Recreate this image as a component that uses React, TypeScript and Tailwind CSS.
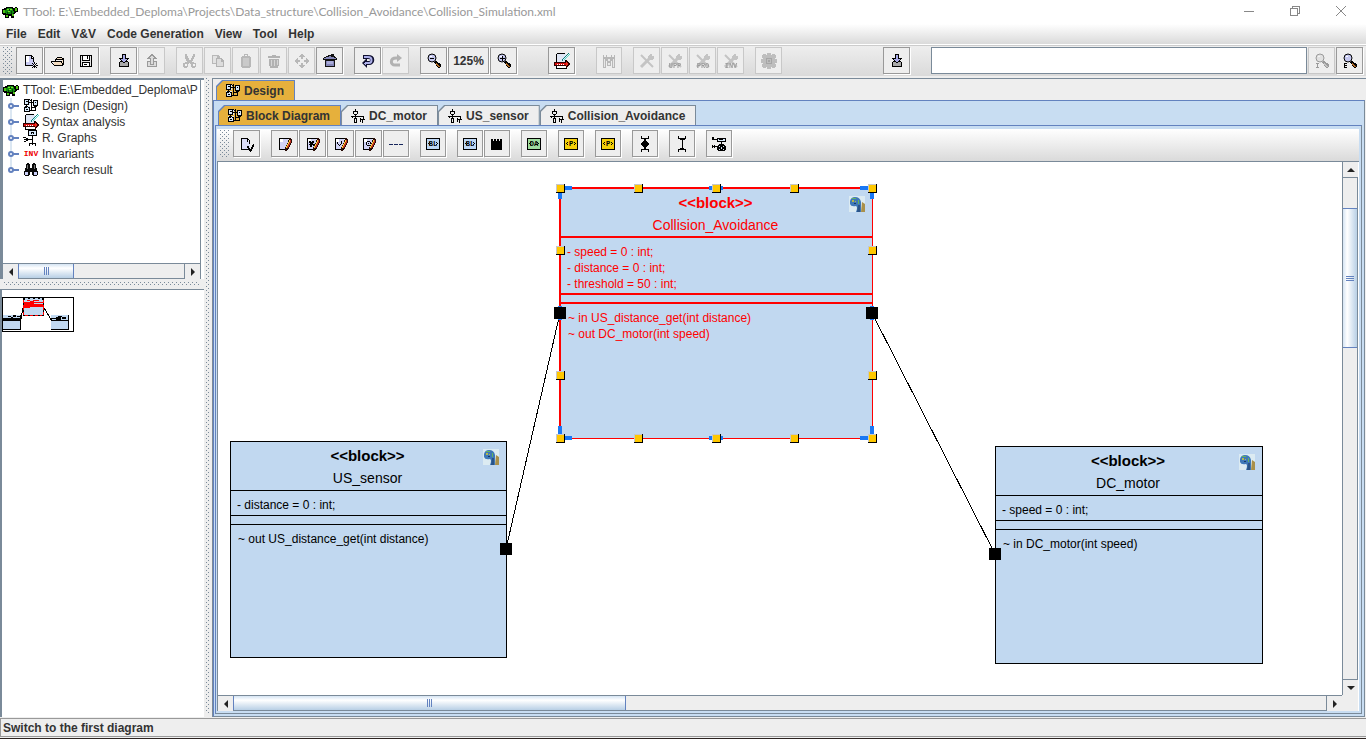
import React from "react";
import type { ReactNode } from "react";

type IconProps = { className?: string };

function Icon({ children, className = "size-4" }: { children: ReactNode; className?: string }) {
  return (
    <svg viewBox="0 0 16 16" className={`shrink-0 ${className}`} shapeRendering="crispEdges" fill="none" aria-hidden="true">
      {children}
    </svg>
  );
}

/* ---------- application icons ---------- */

function Turtle({ className }: IconProps) {
  return (
    <Icon className={className}>
      <path d="M4 3h7v1h2V3h2v1h1v4h-2v1h-1v1h-1v4H9v-2H7v2H3v-3H1v-1H0V5h2V4h2z" fill="#000" />
      <path d="M5 4h5v1h1v2h1v2h-1v1H4V9H3V6h1V5h1z" fill="#0f8a0f" />
      <path d="M1 6h2v3H1zM13 4h2v3h-2zM4 11h2v2H4zM10 10h2v2h-2z" fill="#4fc414" />
      <path d="M5 5h2v1H5zM8 5h2v1H8zM6 7h2v1H6z" fill="#7be32a" />
      <path d="M7 5h1v2H7zM5 8h1v2H5zM9 7h1v3H9z" fill="#033f03" />
    </Icon>
  );
}

function BlockDiagramIcon({ className }: IconProps) {
  return (
    <Icon className={className}>
      <path d="M1 1h6v6H1zM1 8h6v6H1zM10 2h4v6h-4z" fill="#d6e8fa" />
      <path
        d="M1 1h6v1H1zM1 1h1v6H1zM5 1h1v6H5zM1 6h5v1H1zM3 3h2v1H3zM3 7h1v3H3zM2 8h3v1H2zM1 9h1v5H1zM1 9h2v1H1zM5 9h2v1H5zM6 9h1v5H6zM1 13h6v1H1zM3 11h2v1H3zM7 2h1v1H7zM8 1h1v12H8zM7 12h1v1H7zM6 4h4v1H6zM10 2h5v1h-5zM10 2h1v6h-1zM14 2h1v6h-1zM11 7h3v2h-3zM12 4h1v1h-1zM12 9h1v4h-1zM9 9h4v1H9zM9 12h3v1H9z"
        fill="#000"
      />
    </Icon>
  );
}

function StateMachineIcon({ className }: IconProps) {
  return (
    <Icon className={className}>
      <path
        d="M5 1h1v2H5zM3 3h5v1H3zM3 3h1v3H3zM7 3h1v3H7zM4 6h3v1H4zM5 7h1v3H5zM2 8h12v1H2zM2 8h1v2H2zM4 10h3v1H4zM4 10h1v4H4zM6 10h1v4H6zM4 14h3v1H4zM13 9h1v2h-1zM10 11h5v1h-5zM10 10h1v4h-1zM12 12h1v3h-1zM1 8h2v1H1z"
        fill="#000"
      />
    </Icon>
  );
}

function SyntaxIcon({ className }: IconProps) {
  return (
    <Icon className={className}>
      <path d="M3 1h9v8H3z" fill="#dfe6f5" />
      <path d="M3 13h9v2H3z" fill="#fff" />
      <path d="M3 0h8v1H3zM2 1h1v9H2zM2 13h1v2H2zM2 15h11v1H2zM12 13h1v2h-1zM11 7h1v2h-1z" fill="#000" />
      <path d="M1 9h12v4H1z" fill="#d90f0f" />
      <path d="M0 9h1v4H0zM1 9h12v1H1zM1 12h12v1H1z" fill="#300" />
      <path d="M3 11h1v1H3zM5 11h1v1H5zM7 11h1v1H7zM9 11h1v1H9z" fill="#fff" />
      <path d="M12 7h1v1h1v1h1v1h1v2h-1v1h-1v1h-1v1h-1z" fill="#300" />
      <path d="M12 9h1v1h1v2h-1v1h-1z" fill="#f03020" />
      <path d="M14 0h1v1h-1v1h-1v1h-1v1h-1v1h-1v1H9v2H8V6h1V5h1V4h1V3h1V2h1V1h1z" fill="#087f7b" />
      <path d="M15 1h1v1h-1v1h-1v1h-1v1h-1v1h-1v1h-1V6h1V5h1V4h1V3h1V2h1z" fill="#53d8ca" />
    </Icon>
  );
}

function GraphIcon({ className }: IconProps) {
  return (
    <Icon className={className}>
      <path d="M6 1h7v5H6z" fill="#d6e8fa" />
      <path
        d="M5 0h9v1H5zM5 0h1v6H5zM13 0h1v6h-1zM5 5h9v1H5zM8 2h3v1H8zM8 3h1v1H8zM10 3h1v1h-1zM9 6h1v9H9zM0 7h3v1H0zM3 8h2v1H3zM1 9h9v1H1zM3 10h2v1H3zM1 11h2v1H1zM6 13h7v1H6zM6 14h1v2H6zM12 14h1v2h-1z"
        fill="#000"
      />
    </Icon>
  );
}

function BinocularsIcon({ className }: IconProps) {
  return (
    <Icon className={className}>
      <path d="M4 1h2v1h1v4h2V2h1V1h2v1h1v4h1v3h1v4h-1v1h-4v-1H9v-3H7v3H6v1H2v-1H1V9h1V6h1V2h1z" fill="#0a0a0a" />
      <path d="M4 3h1v4H4zM11 3h1v4h-1z" fill="#777" />
      <path d="M2 10h3v3H2zM11 10h3v3h-3z" fill="#ccd0fa" />
    </Icon>
  );
}

function InvIcon() {
  return (
    <svg viewBox="0 0 16 16" className="size-4 shrink-0">
      <text x="8" y="10" textAnchor="middle" fontSize="8" fontWeight="700" fontFamily="Liberation Mono, monospace" fill="#e00">
        INV
      </text>
    </svg>
  );
}

/* ---------- toolbar icons ---------- */

const NewIcon = () => (
  <Icon>
    <path d="M4 3h6v2h2v8H4z" fill="#c9cbf2" />
    <path d="M4 3h3v6H4z" fill="#fff" />
    <path d="M3 2h7v1H3zM3 2h1v11H3zM10 3h1v1h-1zM11 4h1v5h-1zM9 3h1v3H9zM9 5h3v1H9zM3 12h6v1H3z" fill="#000" />
    <path d="M12 9h1v2h-1zM12 13h1v2h-1zM9 12h2v1H9zM14 12h2v1h-2zM10 10h1v1h-1zM14 10h1v1h-1zM10 14h1v1h-1zM14 14h1v1h-1zM12 12h1v1h-1zM11 11h1v1h-1zM13 11h1v1h-1zM11 13h1v1h-1zM13 13h1v1h-1z" fill="#000" />
  </Icon>
);

const OpenIcon = () => (
  <Icon>
    <path d="M2 8h10v5H4V9H2zM6 5h7v7h-1V7H6z" fill="#f3dcc0" />
    <path d="M7 4h5v1H7zM6 5h1v1H6zM5 6h8v1H5zM12 5h1v1h-1zM13 5h1v7h-1zM1 8h10v1H1zM1 9h1v1H1zM2 10h1v1H2zM3 11h1v1H3zM4 12h9v1H4zM11 8h1v2h-1zM12 10h1v2h-1zM5 7h1v1H5z" fill="#000" />
  </Icon>
);

const SaveIcon = () => (
  <Icon>
    <path d="M2 2h12v12H2z" fill="#000" />
    <path d="M3 3h10v10H3z" fill="#e9e9e9" />
    <path d="M4 2h8v6H4zM4 9h8v5H4z" fill="#000" />
    <path d="M5 3h6v4H5zM5 10h6v3H5z" fill="#fff" />
    <path d="M9 3h1v3H9zM6 11h3v1H6z" fill="#000" />
  </Icon>
);

const ImportIcon = () => (
  <Icon>
    <path d="M4 8h8v1h1v5H3V9h1z" fill="#000" />
    <path d="M4 9h8v4H4z" fill="#aaaaaa" />
    <path d="M6 1h4v4h3v1h-1v1h-1v1h-1v1H9v1H7V9H6V8H5V7H4V6H3V5h3z" fill="#000" />
    <path d="M7 2h2v4h2v1h-1v1H9v1H7V8H6V7H5V6h2z" fill="#a9abe8" />
  </Icon>
);

const ExportIcon = () => (
  <Icon>
    <path d="M3 8h10v6H3z" fill="#000" />
    <path d="M4 9h8v4H4z" fill="#bbb" />
    <path d="M7 1h2v1h1v1h1v1h1v1h1v1h-3v6H6V6H3V5h1V4h1V3h1V2h1z" fill="#000" />
    <path d="M7 3h2v1h1v1H9v6H7V5H6V4h1z" fill="#bbb" />
  </Icon>
);

const CutIcon = () => (
  <Icon>
    <path d="M3 1h2v2h1v2h1v2h2V5h1V3h1V1h2v3h-1v2h-1v2h-1v1h2v1h2v4h-1v1h-3v-1h-1v-3H8v-1H7v1H6v3H5v1H2v-1H1v-4h2V9h2V8H4V6H3z" fill="#555" />
    <path d="M3 11h2v2H3zM11 11h2v2h-2z" fill="#fff" />
  </Icon>
);

const CopyIcon = () => (
  <Icon>
    <path d="M2 2h6l2 2v7H2z" fill="#555" />
    <path d="M3 3h4v7H3z" fill="#ccc" />
    <path d="M6 5h5l3 3v6H6z" fill="#444" />
    <path d="M7 6h4v3h2v4H7z" fill="#bbb" />
  </Icon>
);

const PasteIcon = () => (
  <Icon>
    <path d="M6 1h4v2h2v1h1v10h-1v1H4v-1H3V4h1V3h2z" fill="#555" />
    <path d="M5 5h6v8H5z" fill="#888" />
    <path d="M7 2h2v1H7z" fill="#fff" />
  </Icon>
);

const TrashIcon = () => (
  <Icon>
    <path d="M6 2h4v1h4v2H2V3h4zM3 6h10v7h-1v2H4v-2H3z" fill="#444" />
    <path d="M5 7h1v6H5zM8 7h1v6H8zM11 7h1v5h-1z" fill="#aaa" />
  </Icon>
);

const MoveIcon = () => (
  <Icon>
    <path d="M7 1h2v1h1v1h1v1H9v2H7V4H5V3h1V2h1zM7 10h2v2h2v1h-1v1H9v1H7v-1H6v-1H5v-1h2zM1 7h1V6h1V5h1v2h2v2H4v2H3v-1H2V9H1zM10 7h2V5h1v1h1v1h1v2h-1v1h-1v1h-1V9h-2z" fill="#555" />
  </Icon>
);

const HomeIcon = () => (
  <Icon>
    <path d="M6 2h3V1h3v2h1v1h1v1h1v2h-2v7H3V7H1V5h1V4h2V3h2z" fill="#111" />
    <path d="M7 3h2v1h3v1h2v1H2V5h2V4h3zM4 8h8v5H4z" fill="#8587b8" />
    <path d="M5 8h6v3H5z" fill="#a9abda" />
  </Icon>
);

const UndoIcon = () => (
  <Icon>
    <path d="M3 4h5c6 0 5 6 1 6H6" stroke="#101030" strokeWidth="4" shapeRendering="auto" />
    <path d="M2 10l5-5v10z" fill="#101030" shapeRendering="auto" />
    <path d="M4 4h4c5 0 4 6 1 6H6" stroke="#adb0ea" strokeWidth="2" shapeRendering="auto" />
    <path d="M4 10l2-2v5z" fill="#adb0ea" />
  </Icon>
);

const RedoIcon = () => (
  <Icon>
    <path d="M12 12H7C2 12 2 5 8 5h2" stroke="#444" strokeWidth="3" shapeRendering="auto" />
    <path d="M9 1l5 4-5 4z" fill="#444" shapeRendering="auto" />
  </Icon>
);

function MagnifierIcon({ mark }: { mark?: "minus" | "plus" | "I" | "E" }) {
  return (
    <Icon>
      <path d="M9 8h2v1h1v1h2v1h1v3h-1v1h-2v-1h-1v-1h-1v-2H9v-1H8V9h1z" fill="#000" />
      <path d="M10 10h1v1h1v1h1v1h1v1h-2v-1h-1v-1h-1z" fill="#b06a24" />
      <circle cx="6" cy="5" r="4" fill="#c5c8f0" stroke="#000" shapeRendering="auto" />
      <path d="M4 3h2v1H4z" fill="#fff" />
      {mark === "minus" && <path d="M4 5h4v1H4z" fill="#000" />}
      {mark === "plus" && <path d="M4 5h5v1H4zM6 3h1v5H6z" fill="#000" />}
      {mark === "I" && <path d="M2 10h3v1H2zM3 10h1v5H3zM2 14h3v1H2z" fill="#000" />}
      {mark === "E" && <path d="M2 10h3v1H2zM2 10h1v5H2zM2 12h3v1H2zM2 14h3v1H2z" fill="#000" />}
    </Icon>
  );
}

const CheckIcon = () => (
  <Icon>
    <path d="M2 2h1v2h2V2h1v2h4V2h1v2h2V2h1v13h-3V8h-1v5H6V8H5v7H2z" fill="#555" />
    <path d="M3 6h1v8H3zM12 6h1v8h-1zM7 6h2v2H7zM7 10h2v2H7z" fill="#ddd" />
  </Icon>
);

function ToolsIcon({ label }: { label?: string }) {
  return (
    <Icon>
      <path d="M2 2l12 12" stroke="#777" strokeWidth="2" shapeRendering="auto" />
      <path d="M12 4L2 14" stroke="#777" strokeWidth="3" shapeRendering="auto" />
      <path d="M11 1h2v2h2v2l-2 2h-2L9 5V3z" fill="#777" />
      {label && (
        <text x="8" y="15" textAnchor="middle" fontSize="7" fontWeight="700" fontFamily="Liberation Mono, monospace" fill="#000">
          {label}
        </text>
      )}
    </Icon>
  );
}

const GearIcon = () => (
  <Icon>
    <path d="M6 0h4v2h1V1h3v1h1v3h-1v1h2v4h-2v1h1v3h-1v1h-3v-1h-1v2H6v-2H5v1H2v-1H1v-3h1v-1H0V6h2V5H1V2h1V1h3v1h1z" fill="#666" />
    <circle cx="8" cy="8" r="3" stroke="#222" />
    <path d="M7 7h2v2H7z" fill="#222" />
  </Icon>
);

const PageCheckIcon = () => (
  <Icon>
    <path d="M3 3h6v2h2v8H3z" fill="#d9dbf7" />
    <path d="M2 2h7v1H2zM2 2h1v12H2zM9 3h1v1H9zM10 4h1v4h-1zM8 3h1v3H8zM2 13h7v1H2z" fill="#000" />
    <path d="M8 10h2v2h1v1h1v-2h1v-2h1V8h1v3h-1v2h-1v2h-1v1h-1v-1h-1v-1H9v-2H8z" fill="#000" />
  </Icon>
);

function PageEditIcon({ mark }: { mark?: string }) {
  return (
    <Icon>
      <path d="M3 3h8v9l-2 2H3z" fill="#d0d2f5" />
      <path d="M3 3h3v3H3z" fill="#fff" />
      <path d="M2 2h10v1H2zM2 2h1v12H2zM2 13h7v1H2zM10 12h1v2h-1z" fill="#000" />
      {mark && <path d={mark} fill="#000" />}
      <path d="M12 2h2v1h1v4h-1v2h-1v2h-1v2h-2v2H8v-4h1V9h1V7h1V4h1z" fill="#2a0d08" />
      <path d="M12 4h1v2h-1v2h-1v2h-1v2H9v-2h1V8h1V6h1z" fill="#f7d23a" />
      <path d="M13 4h1v3h-1v2h-1v2h-1v1h-1v-2h1V8h1V6h1z" fill="#c33020" />
    </Icon>
  );
}

const DashIcon = () => (
  <Icon>
    <path d="M1 8h4v1H1zM6 8h4v1H6zM11 8h4v1h-4z" fill="#17265c" />
  </Icon>
);

function LabelIcon({ label, tone }: { label: string; tone: "blue" | "green" | "yellow" }) {
  const fill = { blue: "#bcd6f5", green: "#9fdc9f", yellow: "#f5cf0a" }[tone];
  return (
    <Icon>
      <path d="M1 2h14v12H1z" fill="#000" />
      <path d="M2 3h12v10H2z" fill={fill} />
      <path d="M3 7h1v1H3zM4 6h1v1H4zM4 8h1v1H4zM12 7h1v1h-1zM11 6h1v1h-1zM11 8h1v1h-1z" fill="#000" />
      <text x="8" y="10" textAnchor="middle" fontSize="7" fontWeight="700" fontFamily="Liberation Sans Narrow, Liberation Mono, monospace" fill="#000">
        {label}
      </text>
    </Icon>
  );
}

const CastleIcon = () => (
  <Icon>
    <path d="M2 3h2v2h1V3h2v2h1V3h2v2h1V3h2v11H2z" fill="#000" />
  </Icon>
);

const CompositionIcon = () => (
  <Icon>
    <path d="M4 0h1v2h6V0h1v3H9v2h1v1h1v1h1v2h-1v1h-1v1H9v2h3v3h-1v-2H5v2H4v-3h3v-2H6v-1H5V9H4V7h1V6h1V5h1V3H4z" fill="#000" />
  </Icon>
);

const PortLinkIcon = () => (
  <Icon>
    <path d="M4 0h1v2h6V0h1v3h-1v1H9v8h1v1h2v3h-1v-2H5v2H4v-3h2v-1h2V4H6V3H4z" fill="#000" />
  </Icon>
);

const FlowIcon = () => (
  <Icon>
    <path d="M7 3h7v3H7z" fill="#d6e8fa" />
    <path d="M1 1h2v2h3v1H1zM6 2h9v1H6zM6 2h1v4H6zM14 2h1v4h-1zM6 5h9v1H6zM8 3h4v1H8zM1 10h5v1H1zM1 9h1v3H1zM3 9h1v3H3zM10 6h1v2h2v1h1v1h1v4h-1v1H7v-1H6v-4h1V9h1V8h2z" fill="#000" />
    <path d="M8 10h1v1H8zM12 10h1v1h-1zM8 13h1v1H8zM12 13h1v1h-1zM10 11h1v2h-1z" fill="#d6e8fa" />
  </Icon>
);

/* ---------- widgets ---------- */

const bumps =
  "bg-[conic-gradient(at_1px_1px,transparent_75%,#7a8a99_0),conic-gradient(at_1px_1px,transparent_75%,#7a8a99_0)] bg-[length:4px_4px] bg-[position:0_0,2px_2px]";

function ToolButton({
  label,
  children,
  disabled = false,
  width = "w-[27px]",
}: {
  label: string;
  children: ReactNode;
  disabled?: boolean;
  width?: string;
}) {
  return (
    <button
      type="button"
      aria-label={label}
      disabled={disabled}
      className={`flex h-[27px] shrink-0 items-center justify-center border bg-[#eeeeee] ${width} ${
        disabled ? "border-[#c8c8c8]" : "border-[#999999] shadow-[1px_1px_0_#ffffff]"
      }`}
    >
      <span className={`flex ${disabled ? "opacity-35 grayscale" : ""}`}>{children}</span>
    </button>
  );
}

function Group({ children }: { children: ReactNode }) {
  return <div className="flex shrink-0 gap-px">{children}</div>;
}

function Tab({ icon, label, active = false }: { icon: ReactNode; label: string; active?: boolean }) {
  return (
    <button
      type="button"
      role="tab"
      aria-selected={active}
      className={`flex pl-px pt-px pr-px [clip-path:polygon(6px_0,100%_0,100%_100%,0_100%,0_6px)] ${
        active ? "bg-[#6382bf]" : "bg-[#7a8a99]"
      }`}
    >
      <span
        className={`flex h-[19px] items-center gap-[3px] pl-2 pr-[10px] [clip-path:polygon(6px_0,100%_0,100%_100%,0_100%,0_6px)] ${
          active ? "bg-[#e6b03c]" : "bg-[#eeeeee]"
        }`}
      >
        {icon}
        <span>{label}</span>
      </span>
    </button>
  );
}

function Arrow({ dir }: { dir: "left" | "right" | "up" | "down" }) {
  const d = {
    left: "M8 2v8L4 6z",
    right: "M4 2v8l4-4z",
    up: "M2 8h8L6 4z",
    down: "M2 4h8L6 8z",
  }[dir];
  return (
    <button
      type="button"
      aria-label={`Scroll ${dir}`}
      className="flex size-[15px] shrink-0 items-center justify-center bg-[#eeeeee]"
    >
      <svg viewBox="0 0 12 12" className="size-3">
        <path d={d} fill="#222" />
      </svg>
    </button>
  );
}

function HScroll({ thumb }: { thumb: string }) {
  return (
    <div className="flex h-4 shrink-0 border-y border-[#7a8a99] bg-[#eeeeee]">
      <Arrow dir="left" />
      <div className="flex flex-1 border-r border-[#7a8a99]">
        <div
          className={`flex items-center justify-center gap-px border-x border-[#6382bf] bg-linear-to-b from-[#d5e4f3] via-white via-30% to-[#b8cfe5] ${thumb}`}
        >
          <span className="h-2 w-px bg-[#6382bf]" />
          <span className="h-2 w-px bg-[#6382bf]" />
          <span className="h-2 w-px bg-[#6382bf]" />
        </div>
      </div>
      <Arrow dir="right" />
    </div>
  );
}

function VScroll() {
  return (
    <div className="flex w-4 shrink-0 flex-col border-x border-[#7a8a99] bg-[#eeeeee]">
      <Arrow dir="up" />
      <div className="flex flex-1 flex-col border-y border-[#7a8a99]">
        <div className="h-[6%]" />
        <div className="flex h-[28%] flex-col items-center justify-center gap-px border-y border-[#6382bf] bg-linear-to-r from-[#d5e4f3] via-white via-30% to-[#b8cfe5]">
          <span className="h-px w-2 bg-[#6382bf]" />
          <span className="h-px w-2 bg-[#6382bf]" />
          <span className="h-px w-2 bg-[#6382bf]" />
        </div>
      </div>
      <Arrow dir="down" />
    </div>
  );
}

function TreeRow({ icon, label, last = false }: { icon: ReactNode; label: string; last?: boolean }) {
  return (
    <li className="flex h-4 items-center pl-1">
      <svg viewBox="0 0 16 16" className="size-4 shrink-0" fill="none" aria-hidden="true">
        <path d={last ? "M4 0v8" : "M4 0v16"} stroke="#b8cfe5" />
        <path d="M6 8h6" stroke="#6382bf" strokeWidth="2" />
        <circle cx="4" cy="8" r="2" fill="#fff" stroke="#6382bf" strokeWidth="2" />
      </svg>
      <span className="flex items-center gap-[3px]">
        {icon}
        <span className="whitespace-nowrap">{label}</span>
      </span>
    </li>
  );
}

/* ---------- diagram ---------- */

function DinoIcon() {
  return (
    <svg viewBox="0 0 16 16" className="absolute right-[7px] top-[7px] size-4" aria-hidden="true">
      <path d="M0 0h16v16H0z" fill="#dcebf2" />
      <path d="M1 5q1-4 5-4 5 0 6 5v10H7q2-5 0-6-5 1-6-2z" fill="#3f78b8" />
      <path d="M3 2h4v1H3zM9 4h1v4H9z" fill="#62b45c" />
      <path d="M3 4h2v2H3zM6 5h1v1H6z" fill="#b5b84a" />
      <path d="M9 9h2v7H8z" fill="#2a5488" />
      <path d="M13 6l3 2v8h-4z" fill="#a9904a" />
      <path d="M5 7h2v1H5z" fill="#173a66" />
    </svg>
  );
}

type BlockProps = {
  name: string;
  attributes: string[];
  methods: string[];
  position: string;
  selected?: boolean;
};

function Block({ name, attributes, methods, position, selected = false }: BlockProps) {
  const line = selected ? "border-[#ff0000] border-b-2" : "border-black border-b";
  return (
    <section
      className={`absolute flex flex-col bg-[#c1d8f0] ${position} ${
        selected ? "border border-l-2 border-t-2 border-[#ff0000] text-[#ff0000]" : "border border-black text-black"
      }`}
    >
      <header className={`h-[49px] shrink-0 pr-[2px] pt-[2px] text-center ${line}`}>
        <h2 className="text-[15px] font-bold leading-[23px]">&lt;&lt;block&gt;&gt;</h2>
        <p className="text-sm leading-[23px]">{name}</p>
      </header>
      <ul className={`px-[6px] pt-[6px] ${line} ${selected ? "pb-px" : "pb-[2px]"}`}>
        {attributes.map((a) => (
          <li key={a}>{a}</li>
        ))}
      </ul>
      <div className={`h-[9px] shrink-0 ${line}`} />
      <ul className="px-[7px] pt-[6px]">
        {methods.map((m) => (
          <li key={m}>{m}</li>
        ))}
      </ul>
      <DinoIcon />
    </section>
  );
}

const handles = [
  [342, 26], [420, 26], [498, 26], [576, 26], [654, 26],
  [342, 88], [654, 88], [342, 213], [654, 213],
  [342, 276], [420, 276], [498, 276], [576, 276], [654, 276],
];

const anchors = [
  [342, 24, 12, 4], [340, 26, 4, 11], [491, 24, 14, 4], [642, 24, 12, 4], [652, 26, 4, 11],
  [342, 274, 12, 4], [340, 264, 4, 12], [491, 274, 14, 4], [642, 274, 12, 4], [652, 264, 4, 12],
  [340, 144, 4, 14], [652, 144, 4, 14],
];

const ports = [[336, 145], [648, 145], [282, 381], [771, 386]];

function Canvas() {
  return (
    <div className="relative min-w-0 flex-1 overflow-hidden bg-white text-xs leading-4">
      <Block
        name="US_sensor"
        attributes={["- distance = 0 : int;"]}
        methods={["~ out US_distance_get(int distance)"]}
        position="left-3 top-[279px] h-[217px] w-[277px]"
      />
      <Block
        name="DC_motor"
        attributes={["- speed = 0 : int;"]}
        methods={["~ in DC_motor(int speed)"]}
        position="left-[777px] top-[284px] h-[218px] w-[268px]"
      />
      <Block
        selected
        name="Collision_Avoidance"
        attributes={["- speed = 0 : int;", "- distance = 0 : int;", "- threshold = 50 : int;"]}
        methods={["~ in US_distance_get(int distance)", "~ out DC_motor(int speed)"]}
        position="left-[341px] top-[25px] h-[252px] w-[314px]"
      />
      <svg className="pointer-events-none absolute inset-0 size-full" shapeRendering="crispEdges" aria-hidden="true">
        <path d="M342 151L288 387M654 151L777 392" stroke="#000" fill="none" />
        {anchors.map(([x, y, w, h]) => (
          <rect key={`a${x}-${y}`} x={x} y={y} width={w} height={h} fill="#1a78f5" />
        ))}
        {handles.map(([x, y]) => (
          <g key={`h${x}-${y}`}>
            <rect x={x - 4} y={y - 4} width="9" height="9" fill="#000" />
            <rect x={x - 4} y={y - 4} width="8" height="8" fill="#c8c8c8" />
            <rect x={x - 3} y={y - 3} width="7" height="7" fill="#ffc800" />
          </g>
        ))}
        {ports.map(([x, y]) => (
          <rect key={`p${x}-${y}`} x={x} y={y} width="12" height="12" fill="#000" />
        ))}
      </svg>
    </div>
  );
}

function MiniMap() {
  return (
    <svg viewBox="0 0 72 35" className="h-[35px] w-[72px]" shapeRendering="crispEdges" role="img" aria-label="Overview">
      <path d="M0 0h72v35H0z" fill="#000" />
      <path d="M1 1h70v33H1z" fill="#fff" />
      <path d="M1 18h18v14H1zM49 18h17v14H49zM21 1h20v18H21z" fill="#c1d8f0" />
      <path d="M1 21h18v3H1zM18 18h1v15h-1zM1 32h18v1H1zM6 19h3v1H6zM9 20h2v1H9zM11 18h3v2h-3zM15 19h3v1h-3zM49 21h6v1h-6zM49 23h17v1H49zM54 20h5v4h-5zM56 19h4v1h-4zM60 20h4v2h-4zM66 18h1v15h-1zM49 32h18v1H49z" fill="#000" />
      <path d="M21 5h20v5H21zM21 1h1v18h-1zM41 1h1v18h-1zM22 10h6v1h-6zM25 3h3v1h-3zM28 4h4v1h-4zM31 3h6v1h-6z" fill="#f00" />
      <path d="M32 6h9v1h-9z" fill="#c1d8f0" />
      <path d="M21 19h21v-1H21z" fill="#f00" />
      <path d="M21 1h2v2h-2zM26 1h2v1h-2zM31 1h2v1h-2zM36 1h2v1h-2zM40 1h2v2h-2zM21 6h1v2h-1zM41 6h1v2h-1zM21 13h1v2h-1zM41 13h1v2h-1zM21 18h2v1h-2zM26 18h2v1h-2zM31 18h2v1h-2zM36 18h2v1h-2zM40 18h2v1h-2z" fill="#000" />
      <path d="M21 11L19 22M42 11l8 13" stroke="#000" fill="none" />
    </svg>
  );
}

/* ---------- page ---------- */

const menus = ["File", "Edit", "V&V", "Code Generation", "View", "Tool", "Help"];

export default function App() {
  return (
    <div className="flex h-screen flex-col overflow-hidden bg-[#eeeeee] font-['Liberation_Sans',Arial,sans-serif] text-xs text-[#333333]">
      <header className="flex h-6 shrink-0 items-center bg-white pl-[2px] pr-[2px]">
        <Turtle />
        <h1 className="flex-1 truncate pl-[5px] font-['Lato','Open_Sans',sans-serif] text-xs text-[#999999]">
          TTool: E:\Embedded_Deploma\Projects\Data_structure\Collision_Avoidance\Collision_Simulation.xml
        </h1>
        <div className="flex h-[21px] self-start text-[#888888]">
          <button type="button" aria-label="Minimize" className="flex w-[46px] items-center justify-center">
            <svg viewBox="0 0 10 10" className="size-[10px]" stroke="currentColor" shapeRendering="crispEdges"><path d="M0 5h10" /></svg>
          </button>
          <button type="button" aria-label="Restore" className="flex w-[46px] items-center justify-center">
            <svg viewBox="0 0 10 10" className="size-[10px]" fill="currentColor" shapeRendering="crispEdges">
              <path d="M0 2h8v1H0zM0 2h1v8H0zM7 2h1v8H7zM0 9h8v1H0zM2 0h8v1H2zM2 0h1v2H2zM9 0h1v8H9zM8 7h1v1H8z" />
            </svg>
          </button>
          <button type="button" aria-label="Close" className="flex w-[46px] items-center justify-center">
            <svg viewBox="0 0 10 10" className="size-[10px]" stroke="currentColor"><path d="M0 0l10 10M10 0L0 10" /></svg>
          </button>
        </div>
      </header>

      <nav className="flex h-[21px] shrink-0 items-center gap-[11px] border-b border-white bg-linear-to-b from-white to-[#dadada] pl-[6px] font-bold">
        {menus.map((m) => (
          <button key={m} type="button">
            {m}
          </button>
        ))}
      </nav>

      <div role="toolbar" aria-label="Main tools" className="flex h-[33px] shrink-0 items-start gap-[11px] border-b-2 border-t border-b-[#eeeeee] border-t-[#cccccc] bg-linear-to-b from-[#eeeeee] to-[#dadada] pr-[3px] pt-px">
        <div className={`-mr-[8px] ml-[3px] h-[27px] w-[10px] shrink-0 ${bumps}`} />
        <Group>
          <ToolButton label="New"><NewIcon /></ToolButton>
          <ToolButton label="Open"><OpenIcon /></ToolButton>
          <ToolButton label="Save"><SaveIcon /></ToolButton>
        </Group>
        <Group>
          <ToolButton label="Import"><ImportIcon /></ToolButton>
          <ToolButton label="Export" disabled><ExportIcon /></ToolButton>
        </Group>
        <Group>
          <ToolButton label="Cut" disabled><CutIcon /></ToolButton>
          <ToolButton label="Copy" disabled><CopyIcon /></ToolButton>
          <ToolButton label="Paste" disabled><PasteIcon /></ToolButton>
          <ToolButton label="Delete" disabled><TrashIcon /></ToolButton>
          <ToolButton label="Move" disabled><MoveIcon /></ToolButton>
          <ToolButton label="First diagram"><HomeIcon /></ToolButton>
        </Group>
        <Group>
          <ToolButton label="Undo"><UndoIcon /></ToolButton>
          <ToolButton label="Redo" disabled><RedoIcon /></ToolButton>
        </Group>
        <Group>
          <ToolButton label="Zoom out"><MagnifierIcon mark="minus" /></ToolButton>
          <ToolButton label="Zoom 125%" width="w-[41px]"><span className="font-bold">125%</span></ToolButton>
          <ToolButton label="Zoom in"><MagnifierIcon mark="plus" /></ToolButton>
        </Group>
        <div className="ml-5">
          <ToolButton label="Syntax analysis"><SyntaxIcon /></ToolButton>
        </div>
        <div className="ml-[10px]">
          <ToolButton label="Simulation" disabled width="w-[26px]"><CheckIcon /></ToolButton>
        </div>
        <Group>
          <ToolButton label="Verify" disabled><ToolsIcon /></ToolButton>
          <ToolButton label="Verify with UPPAAL" disabled><ToolsIcon label="UPP" /></ToolButton>
          <ToolButton label="Verify with ProVerif" disabled><ToolsIcon label="PRO" /></ToolButton>
          <ToolButton label="Invariants" disabled><ToolsIcon label="INV" /></ToolButton>
        </Group>
        <ToolButton label="Generate code" disabled><GearIcon /></ToolButton>
        <div className="ml-[90px] mr-[10px]">
          <ToolButton label="Download"><ImportIcon /></ToolButton>
        </div>
        <div className="flex min-w-0 flex-1 gap-px">
          <input
            type="text"
            aria-label="Search"
            className="h-[27px] min-w-0 flex-1 border border-[#7a8a99] bg-white px-1 outline-none"
          />
          <ToolButton label="Search inside" disabled><MagnifierIcon mark="I" /></ToolButton>
          <ToolButton label="Search external"><MagnifierIcon mark="E" /></ToolButton>
        </div>
      </div>

      <div className="flex min-h-0 flex-1">
        <aside className="flex w-[204px] shrink-0 flex-col bg-white">
          <div className="flex h-[201px] shrink-0 flex-col border-l-[3px] border-t-2 border-[#7a8a99] pr-[3px]">
            <div className="flex min-h-0 flex-1 flex-col overflow-hidden border-r border-[#7a8a99]">
              <ul className="flex-1 overflow-hidden pt-[2px]">
                <li className="flex h-4 items-center gap-1">
                  <Turtle />
                  <span className="whitespace-nowrap">TTool: E:\Embedded_Deploma\P</span>
                </li>
                <TreeRow icon={<BlockDiagramIcon />} label="Design (Design)" />
                <TreeRow icon={<SyntaxIcon />} label="Syntax analysis" />
                <TreeRow icon={<GraphIcon />} label="R. Graphs" />
                <TreeRow icon={<InvIcon />} label="Invariants" />
                <TreeRow icon={<BinocularsIcon />} label="Search result" last />
              </ul>
              <HScroll thumb="w-[34%]" />
            </div>
          </div>
          <div className="flex h-[11px] shrink-0 items-center border-b border-[#7a8a99] bg-[#eeeeee] pl-1 pr-1">
            <div className={`h-[4px] flex-1 ${bumps}`} />
          </div>
          <div className="flex-1 border-l-2 border-[#7a8a99] bg-white pt-[7px]">
            <MiniMap />
          </div>
        </aside>

        <div className="flex w-2 shrink-0 justify-center bg-[#eeeeee] pb-1">
          <div className={`w-[4px] ${bumps}`} />
        </div>

        <main className="flex min-w-0 flex-1 flex-col border-l border-t border-[#7a8a99] bg-[#eeeeee] pr-px font-bold">
          <div role="tablist" aria-label="Models" className="flex h-[21px] shrink-0 items-end pl-[3px]">
            <Tab active icon={<BlockDiagramIcon />} label="Design" />
          </div>
          <div className="flex min-h-0 flex-1 flex-col border border-b-[#7a8a99] border-l-[#6382bf] border-r-[#7a8a99] border-t-[#6382bf] bg-[#c8ddf2] pb-[2px] pl-px pr-[2px] pt-1">
            <div role="tablist" aria-label="Diagrams" className="flex h-5 shrink-0 pl-[3px]">
              <Tab active icon={<BlockDiagramIcon />} label="Block Diagram" />
              <Tab icon={<StateMachineIcon />} label="DC_motor" />
              <Tab icon={<StateMachineIcon />} label="US_sensor" />
              <Tab icon={<StateMachineIcon />} label="Collision_Avoidance" />
            </div>
            <div className="flex min-h-0 flex-1 flex-col border border-b-[#7a8a99] border-l-[#6382bf] border-r-[#7a8a99] border-t-[#6382bf] pb-[2px] pl-px pr-[2px] pt-[3px] font-normal">
              <div role="toolbar" aria-label="Diagram tools" className="flex h-8 shrink-0 items-start gap-[11px] bg-linear-to-b from-white to-[#dadada] pt-px">
                <div className={`-mr-[8px] ml-[3px] h-[27px] w-[10px] shrink-0 ${bumps}`} />
                <ToolButton label="Edit model"><PageCheckIcon /></ToolButton>
                <Group>
                  <ToolButton label="Note"><PageEditIcon /></ToolButton>
                  <ToolButton label="Pragma"><PageEditIcon mark="M4 5h2v1h1V5h2v2H8v1h2v2H8V9H7v2H5V9H4V8h1V7H4z" /></ToolButton>
                  <ToolButton label="Safety pragma"><PageEditIcon mark="M4 6h1v2H4zM5 8h1v1H5zM6 9h1v1H6zM7 8h1v1H7zM8 5h1v3H8z" /></ToolButton>
                  <ToolButton label="Performance pragma"><PageEditIcon mark="M6 5h3v1H6zM5 6h1v3H5zM6 9h3v1H6zM9 6h1v2H9zM7 7h1v1H7z" /></ToolButton>
                  <ToolButton label="Connector" width="w-[26px]"><DashIcon /></ToolButton>
                </Group>
                <ToolButton label="Block" width="w-[26px]"><LabelIcon label="BL" tone="blue" /></ToolButton>
                <Group>
                  <ToolButton label="Library block" width="w-[26px]"><LabelIcon label="BL" tone="blue" /></ToolButton>
                  <ToolButton label="Crypto block" width="w-[26px]"><CastleIcon /></ToolButton>
                </Group>
                <ToolButton label="Data type" width="w-[26px]"><LabelIcon label="DA" tone="green" /></ToolButton>
                <ToolButton label="Port" width="w-[26px]"><LabelIcon label="P" tone="yellow" /></ToolButton>
                <ToolButton label="Port group" width="w-[26px]"><LabelIcon label="P" tone="yellow" /></ToolButton>
                <ToolButton label="Composition" width="w-[26px]"><CompositionIcon /></ToolButton>
                <ToolButton label="Port connector" width="w-[26px]"><PortLinkIcon /></ToolButton>
                <ToolButton label="Show attributes" width="w-[26px]"><FlowIcon /></ToolButton>
              </div>
              <div className="flex min-h-0 flex-1 flex-col border-l border-t border-[#7a8a99] bg-white pr-px">
                <div className="flex min-h-0 flex-1">
                  <Canvas />
                  <VScroll />
                </div>
                <div className="flex bg-[#eeeeee]">
                  <div className="min-w-0 flex-1">
                    <HScroll thumb="w-[36%]" />
                  </div>
                  <div className="w-4 shrink-0" />
                </div>
              </div>
            </div>
          </div>
        </main>
      </div>

      <footer className="flex h-[22px] shrink-0 flex-col border-b border-[#2b2320] bg-[#eeeeee] pt-px font-bold">
        <p className="flex flex-1 items-center border-b border-l border-t border-[#999999] pl-[2px] pt-px">Switch to the first diagram</p>
        <div className="h-px" />
      </footer>
    </div>
  );
}
